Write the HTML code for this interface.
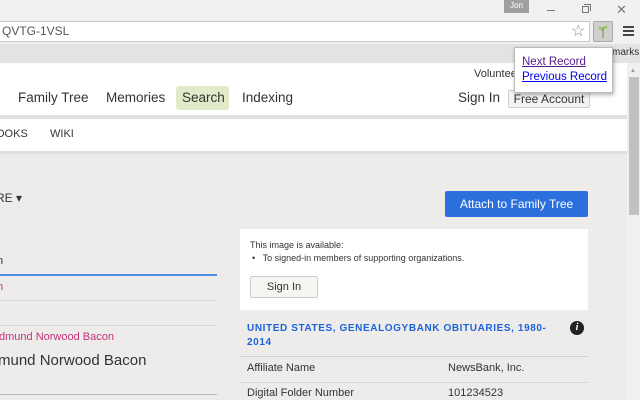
<!DOCTYPE html>
<html><head><style>
*{margin:0;padding:0;box-sizing:border-box}
body{width:640px;height:400px;overflow:hidden;position:relative;font-family:"Liberation Sans",sans-serif;background:#edeceb}
.a{position:absolute;white-space:nowrap}
</style></head><body>
<!-- chrome -->
<div class="a" style="left:0;top:0;width:640px;height:18px;background:#f1f1f1"></div>
<div class="a" style="left:504px;top:0;width:25px;height:13px;background:#a0a0a0;color:#fff;font-size:8px;text-align:center;line-height:12px">Jon</div>
<div class="a" style="left:446px;top:4px;width:160px;color:#777;font-size:12px;"></div>
<div class="a" style="left:447px;top:0"></div>
<div class="a" style="left:446px;top:10px;width:0"></div>
<div class="a" style="left:447px;top:0"></div>
<div class="a" style="left:447px;top:0"></div>
<div class="a" style="left:447px;top:0"></div>
<div class="a" style="left:447px;top:0"></div>
<div class="a" style="left:447px;top:0"></div>
<div class="a" style="left:447px;top:0"></div>
<div class="a" style="left:447px;top:0"></div>
<div class="a" style="left:447px;top:0"></div>
<div class="a" style="left:447px;top:0"></div>
<div class="a" style="left:447px;top:0"></div>
<div class="a" style="left:447px;top:0"></div>
<div class="a" style="left:447px;top:0"></div>
<div class="a" style="left:547px;top:10px;width:8px;height:1px;background:#777"></div>
<div class="a" style="left:582px;top:6px;width:7px;height:7px;border:1px solid #777"></div>
<div class="a" style="left:584px;top:4px;width:7px;height:7px;border-top:1px solid #777;border-right:1px solid #777"></div>
<div class="a" style="left:616px;top:2px;font-size:13px;color:#777">✕</div>
<div class="a" style="left:0;top:18px;width:640px;height:26px;background:#f1f1f1"></div>
<div class="a" style="left:0;top:21px;width:590px;height:21px;background:#fff;border:1px solid #c8c8c8;border-left:none"></div>
<div class="a" style="left:2px;top:24px;font-size:12px;color:#555">QVTG-1VSL</div>
<div class="a" style="left:571px;top:21px;font-size:16px;color:#888">☆</div>
<div class="a" style="left:593px;top:21px;width:20px;height:21px;background:#cfcfcf;border:1px solid #aaa;border-radius:2px"></div>
<svg class="a" style="left:596px;top:23px" width="14" height="16"><path d="M7 15 L7 4 M7 8 L4 5 M7 6 L10 3" stroke="#8a6" stroke-width="1.5" fill="none"/><circle cx="4" cy="5" r="1.5" fill="#9c5"/><circle cx="10" cy="4" r="1.5" fill="#9c5"/></svg>
<div class="a" style="left:623px;top:26px;width:11px;height:2px;background:#444;box-shadow:0 4px 0 #444,0 8px 0 #444"></div>
<div class="a" style="left:0;top:44px;width:640px;height:19px;background:#e3e3e3"></div>
<div class="a" style="left:612px;top:47px;font-size:10px;color:#333">marks</div>
<!-- page header -->
<div class="a" style="left:0;top:63px;width:627px;height:52px;background:#fff"></div>
<div class="a" style="left:474px;top:68px;font-size:11px;color:#333">Voluntee</div>
<div class="a" style="left:176px;top:86px;width:53px;height:24px;background:#e2ebc9;border-radius:3px"></div>
<div class="a" style="left:18px;top:90px;font-size:13.5px;color:#333">Family Tree</div>
<div class="a" style="left:106px;top:90px;font-size:13.5px;color:#333">Memories</div>
<div class="a" style="left:182px;top:90px;font-size:13.5px;color:#333">Search</div>
<div class="a" style="left:242px;top:90px;font-size:13.5px;color:#333">Indexing</div>
<div class="a" style="left:458px;top:90px;font-size:13.5px;color:#333">Sign In</div>
<div class="a" style="left:508px;top:90px;width:82px;height:18px;background:#f4f4f4;border:1px solid #ccc;border-radius:2px;font-size:12px;color:#333;text-align:center;line-height:17px">Free Account</div>
<div class="a" style="left:0;top:115px;width:627px;height:4px;background:#e0e0e0"></div>
<div class="a" style="left:0;top:119px;width:627px;height:32px;background:#fff"></div>
<div class="a" style="left:-4px;top:128px;font-size:11px;color:#333">OOKS</div>
<div class="a" style="left:50px;top:128px;font-size:11px;color:#333">WIKI</div>
<div class="a" style="left:0;top:151px;width:627px;height:3px;background:#e0e0e0"></div>
<!-- scrollbar -->
<div class="a" style="left:627px;top:63px;width:13px;height:337px;background:#f0f0f0"></div>
<div class="a" style="left:630px;top:68px;font-size:6px;color:#999">▲</div>
<div class="a" style="left:629px;top:77px;width:10px;height:138px;background:#c1c1c1"></div>
<!-- popup -->
<div class="a" style="left:514px;top:47px;width:99px;height:46px;background:#fff;border:1px solid #bbb;box-shadow:1px 2px 4px rgba(0,0,0,.3)"></div>
<div class="a" style="left:522px;top:56px;font-size:11.5px;color:#551a8b;text-decoration:underline">Next Record</div>
<div class="a" style="left:522px;top:71px;font-size:11.5px;color:#00e;text-decoration:underline">Previous Record</div>
<!-- left column -->
<div class="a" style="left:-4px;top:191px;font-size:12px;color:#333">RE ▾</div>
<div class="a" style="left:-3px;top:255px;font-size:11px;color:#333">n</div>
<div class="a" style="left:0;top:274px;width:217px;height:2px;background:#4a8ee6"></div>
<div class="a" style="left:-3px;top:281px;font-size:11px;color:#c0337c">n</div>
<div class="a" style="left:0;top:300px;width:217px;height:1px;background:#d8d8d8"></div>
<div class="a" style="left:-3px;top:306px;font-size:11px;color:#555">.</div>
<div class="a" style="left:0;top:325px;width:217px;height:1px;background:#d8d8d8"></div>
<div class="a" style="left:-1px;top:331px;font-size:11px;color:#c0337c">dmund Norwood Bacon</div>
<div class="a" style="left:-2px;top:352px;font-size:15px;color:#333">mund Norwood Bacon</div>
<div class="a" style="left:0;top:394px;width:217px;height:1px;background:#bbb"></div>
<!-- right column -->
<div class="a" style="left:445px;top:191px;width:143px;height:26px;background:#2a6fdb;border-radius:2px;color:#fff;font-size:12px;text-align:center;line-height:26px">Attach to Family Tree</div>
<div class="a" style="left:240px;top:229px;width:348px;height:81px;background:#fff"></div>
<div class="a" style="left:250px;top:240px;font-size:9px;color:#333">This image is available:</div>
<div class="a" style="left:252px;top:253px;font-size:9px;color:#333">•&nbsp;&nbsp;&nbsp;To signed-in members of supporting organizations.</div>
<div class="a" style="left:250px;top:276px;width:68px;height:22px;background:#f6f5f2;border:1px solid #ccc;border-radius:2px;font-size:11px;color:#333;text-align:center;line-height:20px">Sign In</div>
<div class="a" style="left:247px;top:322px;font-size:10px;font-weight:bold;color:#1d63d8;letter-spacing:.6px;line-height:14px">UNITED STATES, GENEALOGYBANK OBITUARIES, 1980-<br>2014</div>
<div class="a" style="left:570px;top:321px;width:14px;height:14px;border-radius:50%;background:#222;color:#fff;font-size:10px;font-weight:bold;text-align:center;line-height:14px;font-family:'Liberation Serif',serif;font-style:italic">i</div>
<div class="a" style="left:240px;top:356px;width:348px;height:1px;background:#d0d0d0"></div>
<div class="a" style="left:247px;top:362px;font-size:11px;color:#333">Affiliate Name</div>
<div class="a" style="left:448px;top:362px;font-size:11px;color:#333">NewsBank, Inc.</div>
<div class="a" style="left:240px;top:382px;width:348px;height:1px;background:#d8d8d8"></div>
<div class="a" style="left:247px;top:387px;font-size:11px;color:#333">Digital Folder Number</div>
<div class="a" style="left:448px;top:387px;font-size:11px;color:#333">101234523</div>
</body></html>
